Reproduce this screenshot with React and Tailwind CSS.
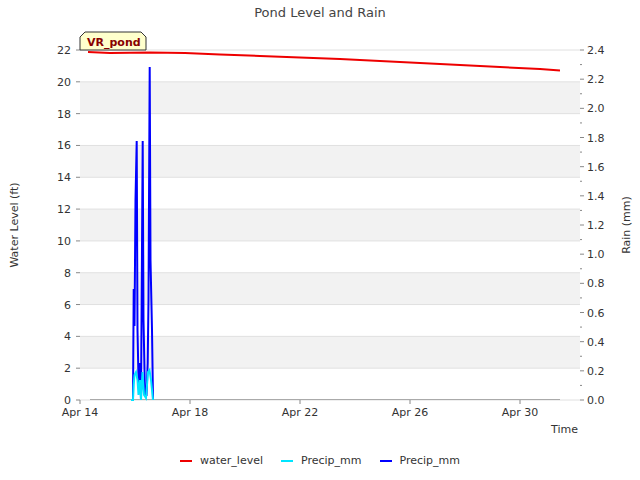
export default function App() {
  const yL = (v) => 400 - v * 15.909;
  const yR = (v) => 400 - v * 145.83;
  const dates = [["Apr 14", 80], ["Apr 18", 190], ["Apr 22", 300], ["Apr 26", 410], ["Apr 30", 520]];
  const blue = "131,400 133,400 133.7,289 134.5,326 135.5,200 136.7,141 137.5,330 138.5,380 139.5,390 140,363 141,400 142.7,141 143.5,320 145,395 146.5,395 147.7,363 148.5,300 149.7,67 150.5,260 152,330 153,400";
  const cyan = "131,400 133,400 133.7,385 134.5,375 136,372 137.5,380 138.5,395 140,380 141,400 142.5,372 144,395 146,398 148,372 149.5,370 151,380 152.5,395 153,400";
  const font = { fontFamily: "'DejaVu Sans', sans-serif" };
  return (
    <div className="w-[640px] h-[480px] bg-white relative" style={font}>
      <svg width="640" height="480" className="absolute left-0 top-0" style={font}>
        <rect x="80" y="50" width="500" height="350" fill="white" />
        {[2, 6, 10, 14, 18].map((v) => (
          <rect key={v} x="80" y={yL(v + 2)} width="500" height={yL(v) - yL(v + 2)} fill="#f2f2f2" />
        ))}
        {[0, 2, 4, 6, 8, 10, 12, 14, 16, 18, 20, 22].map((v) => (
          <g key={v}>
            <line x1="80" x2="580" y1={yL(v)} y2={yL(v)} stroke="#e0e0e0" strokeWidth="1" />
            <line x1="76" x2="80" y1={yL(v)} y2={yL(v)} stroke="#888" />
            <text x="71" y={yL(v) + 4} fontSize="11" textAnchor="end" fill="#333">{v}</text>
          </g>
        ))}
        {Array.from({ length: 25 }, (_, i) => i / 10).map((v, i) => (
          <g key={i}>
            <line x1="580" x2={i % 2 === 0 ? 584 : 582} y1={yR(v)} y2={yR(v)} stroke="#888" />
            {i % 2 === 0 && (
              <text x="587" y={yR(v) + 4} fontSize="11" fill="#333">{v.toFixed(1)}</text>
            )}
          </g>
        ))}
        {dates.map(([d, x]) => (
          <g key={d}>
            <line x1={x} x2={x} y1="400" y2="404" stroke="#888" />
            <text x={x} y="416" fontSize="11" textAnchor="middle" fill="#333">{d}</text>
          </g>
        ))}
        <line x1="90" x2="560" y1="399.5" y2="399.5" stroke="#aaa" />
        <polyline points={blue} fill="none" stroke="#0000ff" strokeWidth="2" />
        <polyline points={cyan} fill="none" stroke="#00e5ff" strokeWidth="2" />
        <polyline points="88,52 110,53 150,52.5 185,53 220,54.5 260,56 300,57.5 340,59 380,61 420,63 460,65 500,67 540,69 560,70.5" fill="none" stroke="#ee0000" strokeWidth="2" />
        <text x="578" y="433" fontSize="11" textAnchor="end" fill="#333">Time</text>
        <text transform="translate(18,225) rotate(-90)" fontSize="11" textAnchor="middle" fill="#333">Water Level (ft)</text>
        <text transform="translate(630,225) rotate(-90)" fontSize="11" textAnchor="middle" fill="#333">Rain (mm)</text>
        <path d="M80,50 L80,37 L85,32 L141,32 L146,37 L146,50 Z" fill="#ffffcc" stroke="#333" />
        <text x="87" y="46" fontSize="11" fontWeight="bold" fill="#880000">VR_pond</text>
      </svg>
      <div className="absolute left-0 top-[3px] w-[640px] text-center text-[13px] text-[#444]">Pond Level and Rain</div>
      <div className="absolute left-0 top-[453px] w-[640px] flex justify-center gap-[18px] text-[11px] text-[#333]">
        <div className="flex items-center gap-2"><span className="w-[12px] h-[2px] bg-[#ee0000]" />water_level</div>
        <div className="flex items-center gap-2"><span className="w-[12px] h-[2px] bg-[#00e5ff]" />Precip_mm</div>
        <div className="flex items-center gap-2"><span className="w-[12px] h-[2px] bg-[#0000ff]" />Precip_mm</div>
      </div>
    </div>
  );
}
